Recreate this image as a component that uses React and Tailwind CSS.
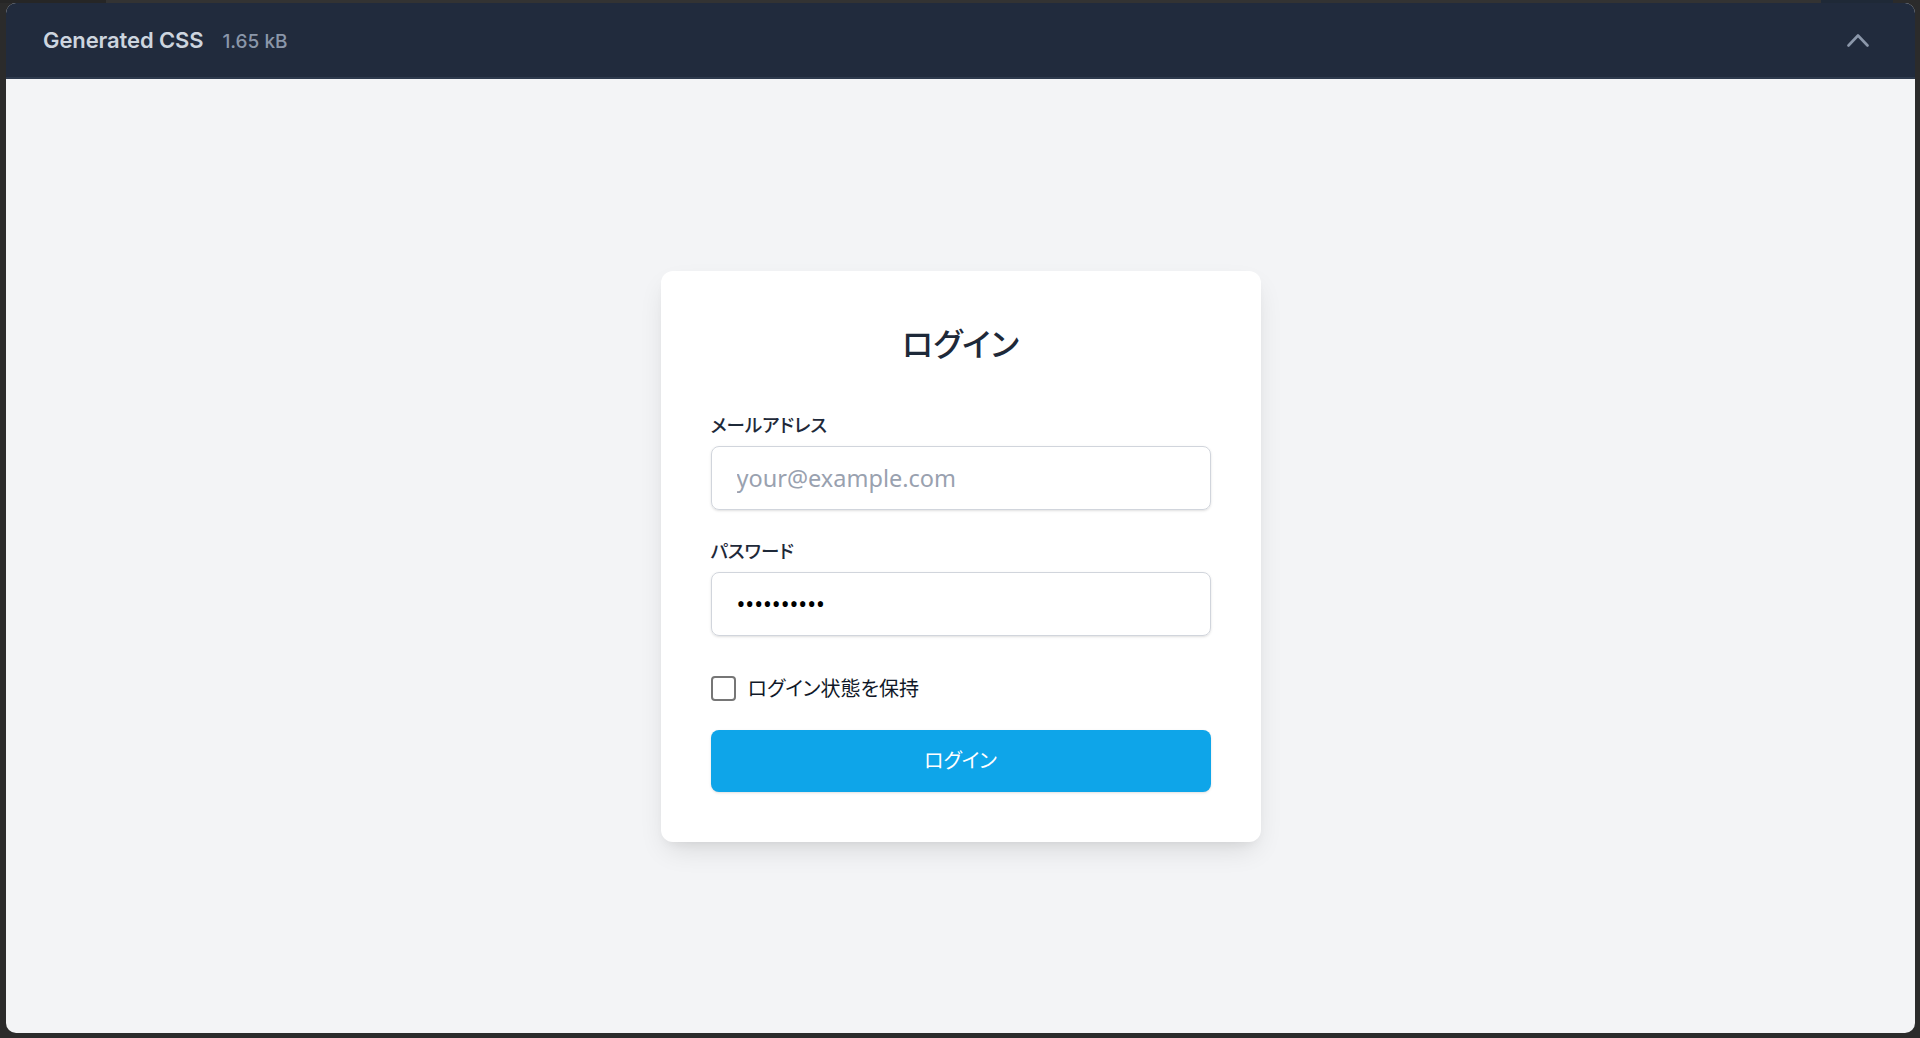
import React from 'react';

const JP = "font-['Noto_Sans','Noto_Sans_CJK_JP',sans-serif] [font-feature-settings:'palt']";

function ChevronUp() {
  return (
    <svg width="22" height="14" viewBox="0 0 22 14" fill="none" className="flex-shrink-0">
      <polyline points="1.5,12.5 11,2.5 20.5,12.5" stroke="#8b97aa" strokeWidth="2.6" strokeLinecap="round" strokeLinejoin="round" />
    </svg>
  );
}

function Field({ label, children }) {
  return (
    <div>
      <label className={`block text-[18.5px] leading-[30px] font-medium text-gray-800 mb-[6px] ${JP}`}>{label}</label>
      {children}
    </div>
  );
}

export default function App() {
  return (
    <div className="h-screen w-full bg-[#2b2b2b] flex flex-col overflow-hidden">
      {/* window behind, peeking over the top */}
      <div className="h-[3px] flex flex-shrink-0">
        <div className="w-[106px] bg-[#262626]" />
        <div className="flex-1 bg-[#333333]" />
        <div className="w-[72px] bg-[#1f2937]" />
        <div className="w-[27px] bg-[#2b2b2b]" />
      </div>

      <div className="flex-1 flex pl-[6px] pr-[5px] pb-[5px] min-h-0">
        <div className="flex-1 flex flex-col rounded-[10px] overflow-hidden bg-[#f3f4f6]">
          {/* Header */}
          <div className="h-[76px] flex-shrink-0 flex items-center justify-between bg-[#212b3d] border-b-2 border-[#2e3a4d] pl-[37px] pr-[46px] font-['Inter',sans-serif]">
            <div className="flex items-baseline gap-[19px]">
              <span className="text-[22px] font-semibold text-[#cdd5df] tracking-[-0.1px]">Generated CSS</span>
              <span className="text-[19px] font-medium text-[#8b97aa]">1.65 kB</span>
            </div>
            <ChevronUp />
          </div>

          {/* Main */}
          <main className="flex-1 flex items-center justify-center">
            <div className="w-[600px] bg-white rounded-[12px] p-[50px] shadow-[0_12px_28px_-6px_rgba(0,0,0,0.12),0_6px_12px_-6px_rgba(0,0,0,0.08)]">
              <h1 className={`text-center text-[32px] leading-[45px] font-medium text-gray-800 mb-[44px] ${JP}`}>ログイン</h1>

              <Field label="メールアドレス">
                <input
                  type="email"
                  placeholder="your@example.com"
                  className="block w-full h-[64px] px-[25px] text-[23.5px] font-['Noto_Sans',sans-serif] border border-gray-300 rounded-[8px] shadow-sm outline-none placeholder:text-gray-400"
                />
              </Field>

              <div className="h-[26px]" />

              <Field label="パスワード">
                <input
                  type="password"
                  defaultValue="password12"
                  readOnly
                  className="block w-full h-[64px] px-[25px] text-[23.5px] font-['Noto_Sans',sans-serif] border border-gray-300 rounded-[8px] shadow-sm outline-none text-black"
                />
              </Field>

              <div className="flex items-center gap-[12px] mt-[38px] h-[30px]">
                <span className="w-[25px] h-[25px] rounded-[4px] border-2 border-[#767676] bg-white flex-shrink-0" />
                <span className={`text-[20px] leading-[30px] text-gray-900 ${JP}`}>ログイン状態を保持</span>
              </div>

              <button className={`mt-[26px] w-full h-[62px] rounded-[8px] bg-[#0ea5e9] text-white text-[20px] shadow-sm ${JP}`}>
                ログイン
              </button>
            </div>
          </main>
        </div>
      </div>
    </div>
  );
}
